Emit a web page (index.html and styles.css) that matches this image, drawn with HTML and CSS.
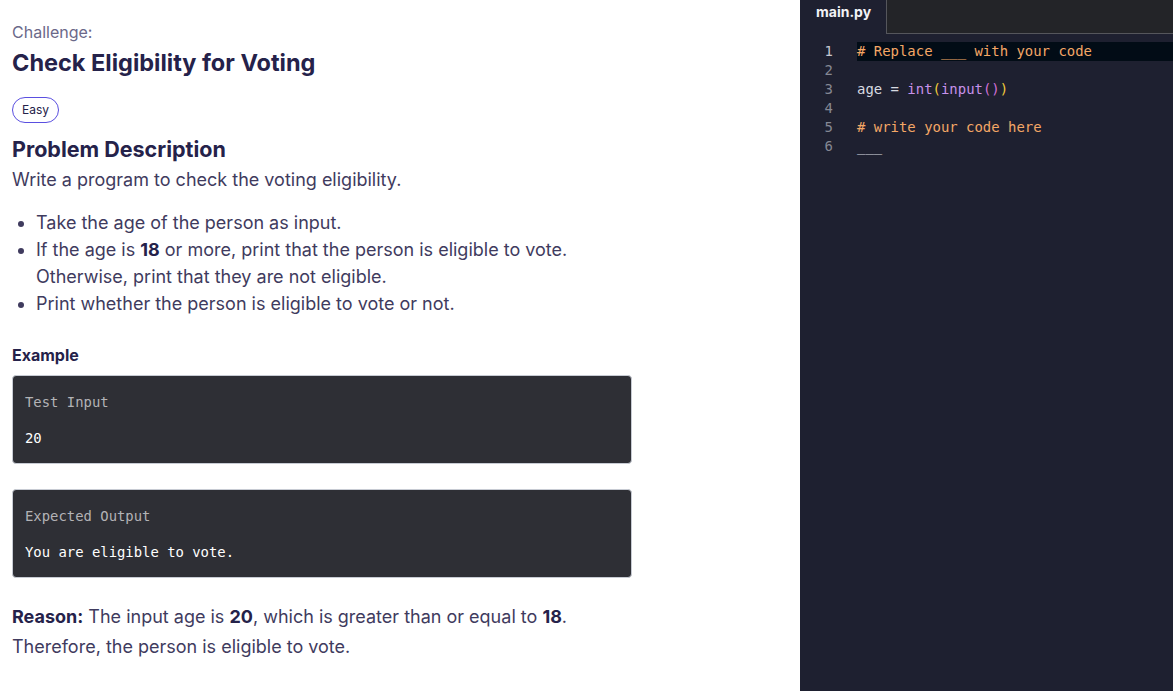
FILE: index.html
```html
<!DOCTYPE html>
<html>
<head>
<meta charset="utf-8">
<link rel="stylesheet" href="styles.css">
</head>
<body>
<div class="app">
  <main class="problem">
    <div class="kicker">Challenge:</div>
    <h1 class="title">Check Eligibility for Voting</h1>
    <span class="badge">Easy</span>
    <h2 class="section">Problem Description</h2>
    <p class="lead">Write a program to check the voting eligibility.</p>
    <ul class="bullets">
      <li>Take the age of the person as input.</li>
      <li>If the age is <b>18</b> or more, print that the person is eligible to vote. Otherwise, print that they are not eligible.</li>
      <li>Print whether the person is eligible to vote or not.</li>
    </ul>
    <h3 class="example-title">Example</h3>
    <div class="codebox">
      <div class="codebox-label">Test Input</div>
      <div class="codebox-value">20</div>
    </div>
    <div class="codebox">
      <div class="codebox-label">Expected Output</div>
      <div class="codebox-value">You are eligible to vote.</div>
    </div>
    <p class="reason"><b>Reason:</b> The input age is <b>20</b>, which is greater than or equal to <b>18</b>.<br>Therefore, the person is eligible to vote.</p>
  </main>
  <aside class="editor">
    <div class="tabs">
      <div class="tab">main.py</div>
      <div class="tab-rest"></div>
    </div>
    <div class="code">
      <div class="line active"><span class="ln">1</span><span class="src"><span class="cm"># Replace ___ with your code</span></span></div>
      <div class="line"><span class="ln">2</span><span class="src"></span></div>
      <div class="line"><span class="ln">3</span><span class="src">age = <span class="fn">int</span><span class="p1">(</span><span class="fn">input</span><span class="p2">()</span><span class="p1">)</span></span></div>
      <div class="line"><span class="ln">4</span><span class="src"></span></div>
      <div class="line"><span class="ln">5</span><span class="src"><span class="cm"># write your code here</span></span></div>
      <div class="line"><span class="ln">6</span><span class="src">___</span></div>
    </div>
  </aside>
</div>
</body>
</html>
```

FILE: styles.css
```css
* { box-sizing: border-box; }
html, body { margin: 0; padding: 0; height: 100%; }
body { font-family: "Inter", "Noto Sans", sans-serif; background: #fff; overflow: hidden; }
.app { display: flex; height: 691px; }
.problem { width: 800px; flex: none; padding: 22px 12px 0 12px; color: #3f3b5e; }
.kicker { font-size: 16px; color: #6b6889; line-height: 20px; }
.title { margin: 6px 0 0 0; font-size: 23.5px; font-weight: 700; color: #25224a; line-height: 30px; }
.badge { display: inline-block; margin-top: 19px; height: 26px; line-height: 24px; padding: 0 9px; border: 1px solid #5a4fe0; border-radius: 13px; font-size: 12px; color: #25224a; }
.section { margin: 12px 0 0 0; font-size: 21.5px; font-weight: 700; color: #25224a; line-height: 28px; }
.lead { margin: 3px 0 0 0; font-size: 18px; line-height: 27px; }
.bullets { margin: 16px 0 0 0; padding-left: 24px; width: 580px; font-size: 18px; line-height: 27px; }
.bullets li::marker { color: #3f3b5e; }
.example-title { margin: 28px 0 0 0; font-size: 16px; font-weight: 700; color: #25224a; line-height: 20px; }
.codebox { width: 620px; height: 89px; margin-top: 10px; background: #2e2f35; border: 1px solid #c7cbd3; border-radius: 4px; padding: 17px 12px; font-family: "DejaVu Sans Mono", "Liberation Mono", monospace; font-size: 13.9px; }
.codebox + .codebox { margin-top: 25px; }
.codebox-label { color: #b3b3b6; line-height: 18px; }
.codebox-value { color: #ffffff; margin-top: 18px; line-height: 18px; }
.reason { margin: 24px 0 0 0; font-size: 18px; line-height: 30px; }
.reason b, .bullets b { color: #25224a; font-weight: 700; }
.editor { flex: 1; background: #1e2030; display: flex; flex-direction: column; }
.tabs { display: flex; height: 34px; }
.tab { width: 86px; padding: 3px 0 0 16px; color: #f2f2f5; font-size: 14px; font-weight: 700; background: #1e2030; }
.tab-rest { flex: 1; background: #232428; border-left: 1px solid #55565c; border-bottom: 1px solid #55565c; }
.code { padding-top: 8px; font-family: "DejaVu Sans Mono", "Liberation Mono", monospace; font-size: 13.95px; }
.line { display: flex; height: 19px; line-height: 19px; }
.ln { width: 33px; text-align: right; color: #858894; flex: none; }
.line.active .ln { color: #c6c8d1; }
.src { margin-left: 24px; flex: 1; color: #d7dae0; white-space: pre; }
.line.active .src { background: #020c16; }
.cm { color: #f4a766; }
.fn { color: #c792ea; }
.p1 { color: #f0c93b; }
.p2 { color: #d070d6; }
```
